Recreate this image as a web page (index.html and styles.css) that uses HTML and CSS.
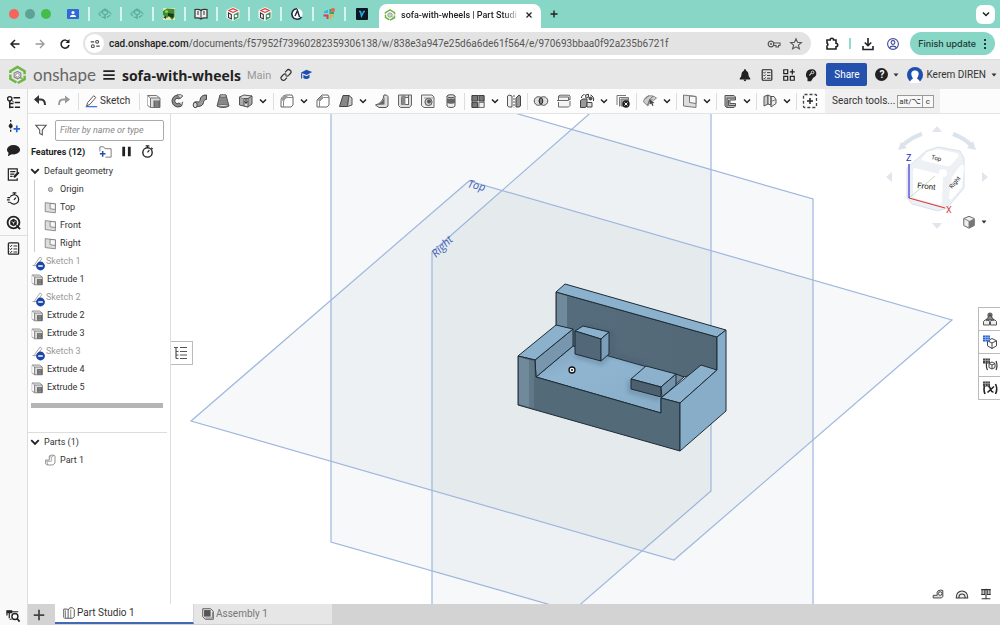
FILE: index.html
```html
<!DOCTYPE html>
<html lang="en">
<head>
<meta charset="utf-8">
<title>sofa-with-wheels | Part Studio 1</title>
<link rel="stylesheet" href="styles.css">
</head>
<body>
<svg class="defs" aria-hidden="true">
  <symbol id="caret" viewBox="0 0 8 8"><path d="M1 2.500 4 5.500 7 2.500" fill="none" stroke="#222" stroke-width="1.500"/></symbol>
  <symbol id="tri" viewBox="0 0 8 8"><path d="M1.500 2.500h5L4 5.500z" fill="#333"/></symbol>
  <symbol id="logo" viewBox="0 0 20 20"><path d="M10 1.500 17.500 6v8.500L10 18.500 2.500 14V6z" fill="none" stroke="#6cb744" stroke-width="2.600" stroke-dasharray="12 1.500"/><path d="M10 6.200 13.500 8v4.200L10 14l-3.500-1.800V8z" fill="#ddd" stroke="#888" stroke-width="1.200"/><circle cx="10" cy="10.200" r="1.900" fill="#fff" stroke="#999"/><path d="M13 12.500 16 15" stroke="#6cb744" stroke-width="1.500"/></symbol>
  <symbol id="eye" viewBox="0 0 14 14"><path d="M1 7q2.500-3.500 6-3.500T13 7q-2.500 3.500-6 3.500T1 7z" fill="none" stroke="#58ad9d" stroke-width="1.200" stroke-dasharray="4 1.200"/><path d="m7 2 2.500 1.500v3L7 8 4.500 6.500v-3z" fill="none" stroke="#58ad9d" stroke-width="1.200"/><path d="M7 8v4" stroke="#58ad9d" stroke-width="1.300"/></symbol>
  <symbol id="cubefav" viewBox="0 0 14 14"><path d="M7 0l6.500 3v8L7 14l-6.500-3V3z" fill="#f4f4f4"/><path d="M7 1l5.500 2.500L7 6 1.500 3.500z" fill="#d6423e"/><path d="M4 3.500 7 2.400l3 1.100-3 1.300z" fill="#fff"/><path d="M1.500 5 6.300 7v6l-4.800-2.600z" fill="#fff"/><path d="M2.500 6v4.500l2.800 1.400V7.500z" fill="none" stroke="#333" stroke-width="1.100"/><path d="M7.800 7.500 12.500 5v5.500l-4.700 2.700z" fill="#3d8a57"/><circle cx="10" cy="9" r="1.300" fill="#fff"/></symbol>
  <symbol id="extrude" viewBox="0 0 16 16"><path d="M1.500 12.500v-10h9l3 2.200" fill="#eee" stroke="#777"/><path d="M1.500 12.500 4.500 14.500V5L1.500 2.500" fill="#fff" stroke="#777"/><path d="M4.500 5h9.500v9.500H4.500z" fill="#ddd" stroke="#777"/><path d="M7.500 7.500H14v7H7.500z" fill="#666"/><path d="M9 9h3.500M9 11h3.500M9 13h3.500" stroke="#999"/></symbol>
  <symbol id="revolve" viewBox="0 0 16 16"><path d="M13 3.500A6 6 0 1 0 13 12.500L10 10A2.600 2.600 0 1 1 10 6z" fill="#8a8a8a" stroke="#444"/><path d="M8 2l3 3.500 3-2.500-2.500-1.500zM10 10l3 2.500.8-3.800" fill="#ccc" stroke="#555" stroke-width=".8"/></symbol>
  <symbol id="sweep" viewBox="0 0 16 16"><path d="M2 9.500c3-2 5.500 1 6-2C8.500 3.500 10.500 2 14.500 2v4.500c-2.500 0-2.500 1-3 3C10.500 14.500 6 12.500 3.500 14.500z" fill="#999" stroke="#444"/><ellipse cx="3.200" cy="12" rx="2" ry="2.600" fill="#ddd" stroke="#444"/></symbol>
  <symbol id="loft" viewBox="0 0 16 16"><path d="M5 2h6l3 11c-3 2-9 2-12 0z" fill="#888" stroke="#555"/><path d="M5 2h6v2H5zM2 13c3-2 9-2 12 0" fill="#ddd" stroke="#555" stroke-width=".8"/></symbol>
  <symbol id="thicken" viewBox="0 0 16 16"><path d="M1.500 4 6 5.500 14 3v8l-4 3-8.500-2z" fill="#aaa" stroke="#555"/><path d="M1.500 4 6 2l8 1-4 2.500v8.500L6 13V5.500M10 5.500H6" fill="#ddd" stroke="#555"/><path d="M8 6v4M6.500 8.500 8 10.500l1.500-2" fill="none" stroke="#222"/></symbol>
  <symbol id="fillet" viewBox="0 0 16 16"><path d="M2 14V7.500C2 4 5 2 8 2h5l1 2v8l-2 2z" fill="#fff" stroke="#666"/><path d="M4.500 14V9C4.500 6 7 4.500 9 4.500h5" fill="none" stroke="#888"/><path d="M2.500 7C3 4 5 2.500 8 2.500L9 4.500c-2.500 0-4 2-4.500 4z" fill="#999"/></symbol>
  <symbol id="chamfer" viewBox="0 0 16 16"><path d="M2 14V7l5-5h6l1 2v8l-2 2z" fill="#fff" stroke="#666"/><path d="M4.500 14V8.500l4-4H14" fill="none" stroke="#888"/><path d="m2.500 7 4.500-4.500 1.500 2-4 4z" fill="#999"/></symbol>
  <symbol id="draft" viewBox="0 0 16 16"><path d="M5 2.500h6L9.500 13.500h-8z" fill="#888" stroke="#444"/><path d="M11 2.500 14 5v7l-4.500 1.500z" fill="#ccc" stroke="#555"/></symbol>
  <symbol id="rib" viewBox="0 0 16 16"><path d="M10 2h2.500l1.500 1.500V13L12 14.500H5L1.500 12Q9 10 10 2z" fill="#ddd" stroke="#555"/><path d="M10.500 4v7.500l-8 .5Q8.500 10 10.500 4z" fill="#666"/></symbol>
  <symbol id="shell" viewBox="0 0 16 16"><path d="M1.500 2h13v10l-2 2.500h-9l-2-2z" fill="#ddd" stroke="#666"/><path d="M4.500 4.500h7v7h-7z" fill="#fff" stroke="#666"/><path d="M4.500 2v10h4V2z" fill="#888"/><path d="M11.500 2v10" stroke="#666"/></symbol>
  <symbol id="hole" viewBox="0 0 16 16"><path d="M1.500 2H12l2 2v10.500H4l-2.500-2z" fill="#eee" stroke="#666"/><path d="M4 5h10" stroke="#999"/><circle cx="8.500" cy="9" r="3.600" fill="#ccc" stroke="#555"/><circle cx="9" cy="8.500" r="2" fill="#555"/></symbol>
  <symbol id="thread" viewBox="0 0 16 16"><path d="M4 3v10c1 2 7 2 8 0V3z" fill="#eee" stroke="#555"/><path d="M4 5.500h8V10c-2 1-6 1-8 0z" fill="#666"/><ellipse cx="8" cy="3.200" rx="4" ry="1.500" fill="#ddd" stroke="#555"/></symbol>
  <symbol id="pattern" viewBox="0 0 16 16"><path d="M2 2.500h12v12H2z" fill="#ccc" stroke="#666"/><path d="M2 2.500h5.500v5.500H2zM9 2.500h5V8H9zM2 9.500h5.500v5H2z" fill="#777" stroke="#333" stroke-width=".8"/><path d="M9 9.500h5v5H9z" fill="#eee" stroke="#666" stroke-width=".8"/></symbol>
  <symbol id="mirror" viewBox="0 0 16 16"><path d="M1.500 3 3 2l3 1v11H3l-1.500-1z" fill="#eee" stroke="#555"/><path d="M14.500 3 13 2l-3 3v9h3l1.500-1z" fill="#999" stroke="#444"/><path d="M8 2v12.500" stroke="#555" stroke-dasharray="2 1"/></symbol>
  <symbol id="boolean" viewBox="0 0 16 16"><circle cx="5.500" cy="8" r="4.300" fill="#ddd" stroke="#555"/><circle cx="10.500" cy="8" r="4.300" fill="#ddd" stroke="#555"/><path d="M8 4.500a4.300 4.300 0 0 1 0 7 4.300 4.300 0 0 1 0-7z" fill="#888" stroke="#222"/></symbol>
  <symbol id="split" viewBox="0 0 16 16"><path d="M2.500 7V3l1.500-.8h9l1 .8v3.500M2.500 9v5h10l1.500-1.500V8" fill="#f3f3f3" stroke="#666"/><path d="M1 7.500h11l2.500-1.500M2.500 4h10v3" fill="none" stroke="#666"/></symbol>
  <symbol id="transform" viewBox="0 0 16 16"><path d="M1.500 7.500 4 6h4v7l-2 1.500H1.500z" fill="#999" stroke="#444"/><path d="M8 9.500h5V14H8zM6.500 2l3-.8v3L7 5.200z" fill="#ddd" stroke="#444"/><circle cx="11.500" cy="5.500" r="2" fill="#555"/><path d="M2.500 5c0-2 1-3 3-3.500M14.500 8c.5-3-.5-5-3-6" fill="none" stroke="#333"/></symbol>
  <symbol id="delete" viewBox="0 0 16 16"><path d="M2 12V2.500h9M4.500 13.500V4.500h9V8" fill="none" stroke="#777"/><path d="M6 6h7v7H6z" fill="#aaa" stroke="#777"/><circle cx="11" cy="11" r="3.700" fill="#222"/><path d="m9.500 9.500 3 3m0-3-3 3" stroke="#fff"/></symbol>
  <symbol id="modify" viewBox="0 0 16 16"><path d="M1.500 9C2 4 8 0 14.500 5l-3 2.500C9 6 7 7 6 13z" fill="#ccc" stroke="#888"/><path d="m3 6 4-3.500M5.500 12l2-5L11 3" fill="none" stroke="#777"/><path d="m7.500 6 5 4-2 .2 1 2.300-1.200.5-1-2.500-1.800 1z" fill="#444"/></symbol>
  <symbol id="plane" viewBox="0 0 16 16"><path d="M1.500 2 14 3.500v11L1.500 13z" fill="#ddd" stroke="#777"/><path d="M7.500 3v6.500l6.500 1V3.500z" fill="#f7f7f7" stroke="#777"/></symbol>
  <symbol id="frame" viewBox="0 0 16 16"><path d="M3 2.500h9l1.500 1.500v3H8v3.500h5.500V13L12 14.500H5L3 13z" fill="#bbb" stroke="#555"/><path d="M5 5h8.500M5 5v9.500M6.500 7v5.500H13" fill="none" stroke="#555"/></symbol>
  <symbol id="sheet" viewBox="0 0 16 16"><path d="M2 3.500 6 2v9l-4 2z" fill="#ccc" stroke="#555"/><path d="m6 2 3 1.500V12l-3-1zM9 3.500h3l2 3v4L9 14z" fill="#eee" stroke="#555"/><path d="M9 8.500 14 6.500" stroke="#777"/></symbol>
  <symbol id="add" viewBox="0 0 16 16"><rect x="1.500" y="1.500" width="13" height="13" rx="1" fill="none" stroke="#444" stroke-width="1.300" stroke-dasharray="3 2"/><path d="M8 5v6M5 8h6" stroke="#222" stroke-width="1.500"/></symbol>
  <symbol id="sketchoff" viewBox="0 0 16 16"><path d="M1.500 10.500h12M4 9l5-7 2 1.500-5 6.500-2.500 1z" fill="none" stroke="#aaa"/><circle cx="9.500" cy="11" r="4.400" fill="#1c46a8"/><path d="M7.200 11h4.600" stroke="#fff" stroke-width="1.500"/></symbol>
  <symbol id="list" viewBox="0 0 16 16"><rect x="2.500" y="2" width="11" height="12" rx="1" fill="none" stroke="#222" stroke-width="1.300"/><path d="m4 5 1 1 1.500-1.800M4 8.200l1 1L6.500 7.400M4 11.400l1 1 1.500-1.800M8 5.300h4M8 8.500h4M8 11.700h4" fill="none" stroke="#222"/></symbol>
  <symbol id="watch" viewBox="0 0 16 16"><circle cx="8" cy="9" r="5" fill="none" stroke="#222" stroke-width="1.500"/><path d="M8 9l2-2.500M6 2h4M8 2v2M12 4l1.500 1.500" stroke="#222" stroke-width="1.300"/></symbol>
</svg>

<header class="tabs">
  <div class="lights"><i class="red"></i><i class="dim"></i><i class="green"></i></div>
  <div class="pinned">
    <svg viewBox="0 0 14 14"><rect x="1" y="2" width="12" height="10" rx="1" fill="#3167d8"/><circle cx="7" cy="5.500" r="1.600" fill="#fff"/><path d="M4 10c0-3 6-3 6 0z" fill="#fff"/></svg>
    <svg><use href="#eye"/></svg>
    <svg><use href="#eye"/></svg>
    <svg viewBox="0 0 14 14"><path d="M1 1h12v12H1z" fill="#e7e5b5"/><path d="M1 4 5 1.500 12.500 2v8L10 13 7 9 5 11 1 8z" fill="#3d8b35"/><path d="m6 6 6 1-1 4-5-2zM1 10l3-1v3z" fill="#173a1b"/><circle cx="4.500" cy="4.500" r="1.500" fill="#9ad04f"/></svg>
    <svg viewBox="0 0 14 14"><path d="M1 2.500C4 2 6 2.500 7 3.500c1-1 3-1.500 6-1v8.500C10 10.500 8 11 7 12c-1-1-3-1.500-6-1z" fill="#eee" stroke="#333" stroke-width="1.200"/><path d="M7 3.500V12M3 5h2M3 7h2M9 5h2M9 7h2" stroke="#333"/></svg>
    <svg><use href="#cubefav"/></svg>
    <svg><use href="#cubefav"/></svg>
    <svg viewBox="0 0 14 14"><circle cx="7" cy="7" r="5.600" fill="#fff"/><path d="M7 1.700A5.300 5.300 0 1 0 11.500 10" fill="none" stroke="#1c2740" stroke-width="1.600"/><path d="m5 9 2.500-5.500L9.500 10" fill="none" stroke="#1c2740" stroke-width="1.400"/></svg>
    <svg viewBox="0 0 14 14"><path d="M5 3v3M2 5h3" stroke="#43b3e4" stroke-width="2"/><path d="M8.500 2v4h3.500" fill="none" stroke="#3a9e78" stroke-width="2"/><path d="M1.500 8.500h4V12" fill="none" stroke="#d83d5d" stroke-width="2"/><path d="M8.500 12V8.500h3.500" fill="none" stroke="#e2b03f" stroke-width="2"/><circle cx="11" cy="3" r="2" fill="#e96155"/></svg>
    <svg viewBox="0 0 14 14"><rect x="1" y="1" width="12" height="12" rx="1" fill="#0c1722"/><path d="M4 4.500h1.500L6.500 9l2.300-4.500H10" fill="none" stroke="#27a8e0" stroke-width="1.600"/></svg>
  </div>
  <div class="tab"><svg><use href="#logo"/></svg><span>sofa-with-wheels | Part Studi</span><button aria-label="Close tab"><svg viewBox="0 0 8 8"><path d="m1.500 1.500 5 5m0-5-5 5" stroke="#222" stroke-width="1.200"/></svg></button></div>
  <button class="newtab" aria-label="New tab"><svg viewBox="0 0 10 10"><path d="M5 1.500v7M1.500 5h7" stroke="#222" stroke-width="1.400"/></svg></button>
  <button class="tabmenu" aria-label="Search tabs"><svg><use href="#caret"/></svg></button>
</header>

<nav class="browser">
  <button aria-label="Back"><svg viewBox="0 0 16 16"><path d="M12.500 8H4m4-4L4 8l4 4" fill="none" stroke="#222" stroke-width="1.500"/></svg></button>
  <button aria-label="Forward"><svg viewBox="0 0 16 16"><path d="M3.500 8H12M8 4l4 4-4 4" fill="none" stroke="#999" stroke-width="1.300"/></svg></button>
  <button aria-label="Reload"><svg viewBox="0 0 16 16"><path d="M11.500 6A4 4 0 1 0 12 9" fill="none" stroke="#222" stroke-width="1.500"/><path d="M12.500 3v4h-4z" fill="#222"/></svg></button>
  <div class="address">
    <span class="site"><svg viewBox="0 0 14 14"><path d="M2 4.500h4M8.500 9.500h4" stroke="#444" stroke-width="1.300"/><circle cx="9.500" cy="4.500" r="1.700" fill="none" stroke="#444" stroke-width="1.200"/><circle cx="4.500" cy="9.500" r="1.700" fill="none" stroke="#444" stroke-width="1.200"/></svg></span>
    <a href="#"><b>cad.onshape.com</b>/documents/f57952f73960282359306138/w/838e3a947e25d6a6de61f564/e/970693bbaa0f92a235b6721f</a>
    <svg viewBox="0 0 14 14"><circle cx="4" cy="7" r="2.800" fill="none" stroke="#555" stroke-width="1.200"/><circle cx="4" cy="7" r="1" fill="#555"/><path d="M7 6h6v2.500h-1.500V10H9V8.500H7" fill="none" stroke="#555" stroke-width="1.100"/></svg>
    <svg viewBox="0 0 14 14"><path d="m7 1.800 1.500 3.500 3.900.3-3 2.500 1 3.800L7 9.800l-3.400 2.100 1-3.800-3-2.500 3.900-.3z" fill="none" stroke="#555" stroke-width="1.100"/></svg>
  </div>
  <button aria-label="Extensions"><svg viewBox="0 0 16 16"><path d="M3 4h3.200a1.700 1.700 0 0 1 3.400 0H12v3.300a1.700 1.700 0 0 1 0 3.400V13H3v-3a1.700 1.700 0 0 0 0-3z" fill="none" stroke="#222" stroke-width="1.600"/></svg></button>
  <i class="mint"></i>
  <button aria-label="Downloads"><svg viewBox="0 0 16 16"><path d="M8 2v7M4.800 6.500 8 9.700l3.200-3.200M3 10v3.500h10V10" fill="none" stroke="#222" stroke-width="1.600"/></svg></button>
  <button aria-label="Profile"><svg viewBox="0 0 16 16"><circle cx="8" cy="8" r="5.400" fill="none" stroke="#414c9a" stroke-width="1.100"/><circle cx="8" cy="6.500" r="1.900" fill="none" stroke="#414c9a" stroke-width="1.100"/><path d="M4.500 12c1-2.500 6-2.500 7 0" fill="none" stroke="#414c9a" stroke-width="1.100"/></svg></button>
  <button class="update">Finish update<svg viewBox="0 0 4 12"><path d="M1 1h2v2H1zM1 5h2v2H1zM1 9h2v2H1z" fill="#223c37"/></svg></button>
</nav>

<header class="doc">
  <svg class="mark"><use href="#logo"/></svg>
  <span class="brand">onshape</span>
  <button aria-label="Menu"><svg viewBox="0 0 16 16"><path d="M1.500 3.500h13M1.500 8h13M1.500 12.500h13" stroke="#222" stroke-width="2"/></svg></button>
  <h1>sofa-with-wheels</h1>
  <span class="branch">Main</span>
  <button aria-label="Copy link"><svg viewBox="0 0 16 16"><path d="m7 5 2-2.200a2.600 2.600 0 0 1 4 3.500L11 8.500a2.500 2.500 0 0 1-3.500 0M9 11l-2 2.200a2.600 2.600 0 0 1-4-3.500L5 7.500a2.500 2.500 0 0 1 3.500 0" fill="none" stroke="#333" stroke-width="1.400"/></svg></button>
  <button aria-label="Learning"><svg viewBox="0 0 16 16"><path d="M2 5.500 8.500 2 15 4.500 9 8z" fill="#1e4fae"/><path d="M5 8v3.500c2 1.500 5 1.200 7-.5V7.500L9 9.500z" fill="#1e4fae"/><path d="M3 6v6" stroke="#1e4fae" stroke-width="1.300"/></svg></button>
  <div class="account">
    <button aria-label="Notifications"><svg viewBox="0 0 16 16"><path d="M8 1.500c1 0 1.300.7 1.300 1.500C12 4 12 7 12.300 9.500L14 12v1H2v-1l1.700-2.500C4 7 4 4 6.700 3c0-.8.3-1.500 1.300-1.500zM6.500 13.500h3C9.500 15.500 6.500 15.500 6.500 13.500z" fill="#222"/></svg></button>
    <button aria-label="Tasks"><svg><use href="#list"/></svg></button>
    <button aria-label="Apps"><svg viewBox="0 0 16 16"><path d="M2 2h4.500v4.500H2zM2 9.500h4.500V14H2zM9.500 9.500H14V14H9.500zM11.800 1.500v6M9 4.500h5.500" fill="none" stroke="#222" stroke-width="1.400"/></svg></button>
    <button aria-label="Advisor"><svg viewBox="0 0 16 16"><path d="M9 1.500c4 0 5.500 3 5 6-.5 2-2 3-3.500 3.500L8 15H4v-3.500C2 10.500 2 8 2.500 6 3.200 3 5.500 1.500 9 1.500z" fill="#222"/><path d="m6 8.500 2.500-2.500" stroke="#eee" stroke-width="1.200"/><circle cx="9.800" cy="5" r="1.500" fill="none" stroke="#eee"/></svg></button>
    <button class="share">Share</button>
    <button class="help" aria-label="Help"><span>?</span><svg class="small"><use href="#tri"/></svg></button>
    <button class="user"><svg viewBox="0 0 16 16"><circle cx="8" cy="8" r="8" fill="#1e4fae"/><path d="M3 16c0-3 2-3.500 3-4.500C2.500 6 5 3.500 8 3.500s5.500 2.500 2 8c1 1 3 1.500 3 4.500z" fill="#fff"/></svg>Kerem DIREN<svg class="small"><use href="#tri"/></svg></button>
  </div>
</header>

<div class="work">
  <aside class="rail">
    <button aria-label="Feature tree"><svg viewBox="0 0 16 16"><circle cx="4" cy="4" r="2.300" fill="none" stroke="#222" stroke-width="1.400"/><path d="M4 6v8M4 9h4M4 13h4M8 3h7M9.500 8H15M9.500 13H15" stroke="#222" stroke-width="1.600"/><path d="m5.500 5 3 3" stroke="#222"/></svg></button>
    <button aria-label="Add"><svg viewBox="0 0 16 16"><path d="M5 1v13" stroke="#222" stroke-width="1.400" stroke-dasharray="2 1.500"/><circle cx="5" cy="7.500" r="2.200" fill="#222"/><path d="M11.500 7v7M8 10.500h7" stroke="#2a62d4" stroke-width="1.800"/></svg></button>
    <button aria-label="Comments"><svg viewBox="0 0 16 16"><ellipse cx="8" cy="7.200" rx="7" ry="5" fill="#222"/><path d="M3 9.500 2 14l5-2.500z" fill="#222"/></svg></button>
    <button aria-label="Notes"><svg viewBox="0 0 16 16"><path d="M12 6V2H2.500v12H12v-2M4.500 5H10M4.500 7.500H9M4.500 10H7" fill="none" stroke="#222" stroke-width="1.300"/><path d="m8.500 11 5-5.500" stroke="#222" stroke-width="2.400"/></svg></button>
    <button aria-label="History"><svg viewBox="0 0 16 16"><path d="M4.500 6a5 5 0 1 1 0 6M1.500 7h3M1 9.500h3M2 12h2.500M7 2h4M9 2v2" fill="none" stroke="#222" stroke-width="1.300"/><path d="m8.500 9.500 2-2.500" stroke="#222" stroke-width="1.300"/></svg></button>
    <button aria-label="Render"><svg viewBox="0 0 16 16"><circle cx="8" cy="8" r="6.300" fill="none" stroke="#222" stroke-width="2"/><path d="m8 4 3.500 2v4L8 12l-3.500-2V6z" fill="#222"/><path d="m6 7 2 1 2-1M8 8v2" fill="none" stroke="#fff" stroke-width=".8"/><path d="m11 11 4 4" stroke="#222" stroke-width="2"/></svg></button>
    <hr>
    <button aria-label="Checklist"><svg><use href="#list"/></svg></button>
    <button class="last" aria-label="Search model"><svg viewBox="0 0 16 16"><path d="M1 3h5v2H1zM3.500 4v7M1 4v4" fill="#222" stroke="#222" stroke-width="1.300"/><path d="M6 4h7M6 12H4" stroke="#222" stroke-width="1.300"/><circle cx="9.500" cy="9" r="3.200" fill="#fff" stroke="#222" stroke-width="1.500"/><path d="m12 11.500 2.500 3" stroke="#222" stroke-width="1.800"/></svg></button>
  </aside>

  <div class="body">
    <div class="toolbar">
      <div class="group"><button aria-label="Undo"><svg viewBox="0 0 16 16"><path d="M3 6.500h6c2.500 0 4 2 4 5.500" fill="none" stroke="#333" stroke-width="2"/><path d="M7 2v9L2 6.500z" fill="#333"/></svg></button><button aria-label="Redo"><svg viewBox="0 0 16 16"><path d="M13 6.500H7c-2.500 0-4 2-4 5.500" fill="none" stroke="#999" stroke-width="1.800"/><path d="M9 2.500v8l5-4z" fill="#999"/></svg></button></div>
      <div class="group sketch"><button><svg viewBox="0 0 16 16"><path d="m4 10 7-8 2.500 2-7 8L3 13.500z" fill="#fff" stroke="#444"/><path d="M2 14.500h13" stroke="#2a62d4" stroke-width="1.300"/></svg>Sketch</button></div>
      <div class="group wide"><button aria-label="Extrude"><svg><use href="#extrude"/></svg></button><button aria-label="Revolve"><svg><use href="#revolve"/></svg></button><button aria-label="Sweep"><svg><use href="#sweep"/></svg></button><button aria-label="Loft"><svg><use href="#loft"/></svg></button><button aria-label="Thicken"><svg><use href="#thicken"/></svg></button><button class="drop" aria-label="More solids"><svg><use href="#caret"/></svg></button></div>
      <div class="group"><button aria-label="Fillet"><svg><use href="#fillet"/></svg></button><button class="drop" aria-label="More fillets"><svg><use href="#caret"/></svg></button><button aria-label="Chamfer"><svg><use href="#chamfer"/></svg></button><button aria-label="Draft"><svg><use href="#draft"/></svg></button><button class="drop" aria-label="More drafts"><svg><use href="#caret"/></svg></button><button aria-label="Rib"><svg><use href="#rib"/></svg></button><button aria-label="Shell"><svg><use href="#shell"/></svg></button><button aria-label="Hole"><svg><use href="#hole"/></svg></button><button aria-label="Thread"><svg><use href="#thread"/></svg></button></div>
      <div class="group"><button aria-label="Pattern"><svg><use href="#pattern"/></svg></button><button class="drop" aria-label="More patterns"><svg><use href="#caret"/></svg></button><button aria-label="Mirror"><svg><use href="#mirror"/></svg></button></div>
      <div class="group"><button aria-label="Boolean"><svg><use href="#boolean"/></svg></button><button aria-label="Split"><svg><use href="#split"/></svg></button><button aria-label="Transform"><svg><use href="#transform"/></svg></button><button class="drop" aria-label="More transforms"><svg><use href="#caret"/></svg></button><button aria-label="Delete part"><svg><use href="#delete"/></svg></button></div>
      <div class="group"><button aria-label="Modify"><svg><use href="#modify"/></svg></button><button class="drop" aria-label="More modify tools"><svg><use href="#caret"/></svg></button></div>
      <div class="group"><button aria-label="Plane"><svg><use href="#plane"/></svg></button><button class="drop" aria-label="More planes"><svg><use href="#caret"/></svg></button></div>
      <div class="group"><button aria-label="Frame"><svg><use href="#frame"/></svg></button><button class="drop" aria-label="More frames"><svg><use href="#caret"/></svg></button></div>
      <div class="group"><button aria-label="Sheet metal"><svg><use href="#sheet"/></svg></button><button class="drop" aria-label="More sheet metal"><svg><use href="#caret"/></svg></button></div>
      <div class="group"><button aria-label="Add custom feature"><svg><use href="#add"/></svg></button></div>
      <button class="search">Search tools...<kbd>alt/⌥</kbd><kbd>c</kbd></button>
    </div>

    <div class="split">
      <section class="panel">
        <div class="filter"><svg viewBox="0 0 16 16"><path d="M2 2.500h12L9.500 8v5.500l-3-1.500V8z" fill="none" stroke="#555" stroke-width="1.200"/></svg><input type="text" aria-label="Filter features" placeholder="Filter by name or type"></div>
        <div class="features"><h2>Features (12)</h2>
          <button aria-label="New folder"><svg viewBox="0 0 16 16"><path d="M2 8V3h4l1.500 2H14v9H8" fill="none" stroke="#777"/><path d="M5 7.500v6M2 10.500h6" stroke="#1e4fae" stroke-width="1.600"/></svg></button>
          <button aria-label="Pause"><svg viewBox="0 0 16 16"><path d="M5 3v10M11 3v10" stroke="#222" stroke-width="3"/></svg></button>
          <button aria-label="Regeneration times"><svg><use href="#watch"/></svg></button></div>
        <button class="row head"><svg class="chev"><use href="#caret"/></svg>Default geometry</button>
        <ul class="nested">
          <li><svg viewBox="0 0 16 16"><circle cx="8" cy="8" r="2.600" fill="#ccc" stroke="#777"/></svg>Origin</li>
          <li><svg><use href="#plane"/></svg>Top</li>
          <li><svg><use href="#plane"/></svg>Front</li>
          <li><svg><use href="#plane"/></svg>Right</li>
        </ul>
        <ul class="flat">
          <li class="off"><svg><use href="#sketchoff"/></svg>Sketch 1</li>
          <li><svg><use href="#extrude"/></svg>Extrude 1</li>
          <li class="off"><svg><use href="#sketchoff"/></svg>Sketch 2</li>
          <li><svg><use href="#extrude"/></svg>Extrude 2</li>
          <li><svg><use href="#extrude"/></svg>Extrude 3</li>
          <li class="off"><svg><use href="#sketchoff"/></svg>Sketch 3</li>
          <li><svg><use href="#extrude"/></svg>Extrude 4</li>
          <li><svg><use href="#extrude"/></svg>Extrude 5</li>
        </ul>
        <div class="rollback"></div>
        <div class="parts">
          <button class="row head"><svg class="chev"><use href="#caret"/></svg>Parts (1)</button>
          <ul class="nested plain"><li><svg viewBox="0 0 16 16"><path d="M2 7.500h4.500v-5L9 1.500h3.500l1 1V11L11 13.500H4L2 12z" fill="#fff" stroke="#777"/><path d="M2 7.500 4 9h5V4l3.500-2.500M9 4 6.500 2.500M4 9v4.500" fill="none" stroke="#999"/></svg>Part 1</li></ul>
        </div>
      </section>

      <main class="canvas">
        <svg class="scene" viewBox="171 114 829 490" preserveAspectRatio="xMinYMin slice" role="img" aria-label="Sofa model with default planes">
          <defs>
            <linearGradient id="dark" x1="0" y1="0" x2="1" y2="0"><stop offset="0" stop-color="#566d7d"/><stop offset="1" stop-color="#536877"/></linearGradient>
            <linearGradient id="light" x1="0" y1="0" x2="1" y2="1"><stop offset="0" stop-color="#7f9fb8"/><stop offset=".3" stop-color="#8fb5d1"/><stop offset="1" stop-color="#88adc9"/></linearGradient>
            <filter id="soft" x="-30%" y="-30%" width="160%" height="160%"><feGaussianBlur stdDeviation="2"/></filter>
          </defs>
          <g fill="#7d95a8" fill-opacity=".065" stroke="#9fb7df" stroke-width="1.200">
            <path d="M331 60V542L813 680V199z"/>
            <path d="M432 252 711 7V491L432 733z"/>
            <path d="M191 421 469 181 952 320 674 560z"/>
          </g>
          <g class="planelabel"><text x="467" y="187" transform="rotate(14 467 187)">Top</text><text x="436" y="258" transform="rotate(-45 436 258)">Right</text></g>
          <g stroke="#1d2b36" stroke-width="1" stroke-linejoin="round">
            <path d="M556 292 717 337V370L683 377 573 348 556 325z" fill="url(#dark)"/>
            <path d="M557 293 567 296V328L557 325z" fill="#718a9b" stroke="none"/>
            <path d="M556 292 565 284 726 330 717 337z" fill="#8bb1cd"/>
            <path d="M536 377 573 346 683 377 661 398V413z" fill="url(#light)"/>
          </g>
          <g fill="none" stroke="#42586a" stroke-width="4" opacity=".35" filter="url(#soft)"><path d="M575 355 601 363 612 353V334L583 325M630 380V391L660 399M612 354 645 364"/></g>
          <g stroke="#1d2b36" stroke-width="1" stroke-linejoin="round">
            <path d="M535 360 573 329V346L536 377z" fill="#7897ae"/>
            <path d="M518 356 556 325 573 329 535 360z" fill="#8bb1cd"/>
            <path d="M575 331 583 326 609 332 601 339z" fill="#8bb1cd"/>
            <path d="M575 331 601 339V361L575 354z" fill="#526878"/>
            <path d="M601 339 609 332V354L601 361z" fill="#7c9fb9"/>
            <path d="M676 374 684 377 662 397z" fill="#6f8da2"/>
            <path d="M631 379 646 366 676 374 661 387z" fill="#8bb1cd"/>
            <path d="M631 379 661 387V397L631 389z" fill="#4c606f"/>
            <path d="M661 387 676 374V385L662 397z" fill="#7393aa"/>
            <path d="M661 398 701 365 717 370 680 403z" fill="#8bb1cd"/>
            <path d="M518 356 535 360 536 377 661 413V398L680 403V451L518 405z" fill="#536a79"/>
            <path d="M519 357 529 360V407L519 404z" fill="#718a9b" stroke="none"/>
            <path d="M529 360 534 361V408L529 407z" fill="#607887" stroke="none"/>
            <path d="M680 403 717 370V337L726 330V411L680 451z" fill="#88adc9"/>
          </g>
          <circle cx="572" cy="370" r="3" fill="#fff" stroke="#111" stroke-width="1.300"/><circle cx="572" cy="370" r="1" fill="#111"/>
        </svg>

        <button class="toggle" aria-label="Show feature list"><svg viewBox="0 0 16 16"><path d="M1 2.500h4M3 2.500v11M3 6.500h2.500M3 10h2.500M3 13.500h2.500M7 2.500h7M7 6.500h7M7 10h7M7 13.500h7" fill="none" stroke="#555" stroke-width="1.200"/></svg></button>

        <svg class="viewcube" viewBox="0 0 110 112" role="img" aria-label="View orientation">
          <g fill="#e2e6ec"><path d="m55 3 5 6H50zM55 106l-5-6h10zM4 54l6-5v10zM106 54l-6-5v10z"/></g>
          <g fill="none" stroke="#dbe3ed" stroke-width="4"><path d="M21 22Q30 14 40 11M71 11Q82 15 89 22"/></g>
          <path d="m16 27 3-8 6 6zM94 27l-9-2 6-7z" fill="#dbe3ed"/>
          <path d="m44 28 12-4 22 4 4 7v30L65 85l-9 3-26-7-5-6V45z" fill="#edf1f6" stroke="#d9e1ec"/>
          <path d="m45 29 11-3 18 4q4 1 2 4l-7 8q-2 2-5 1l-22-5q-4-1-1-4zM33 45l24 6q4 1 4 5l-1 22q0 4-5 3l-20-5q-4-1-4-5V49q0-4 2-4zM70 54l8-11q4-4 4 2l-2 19-9 11q-4 4-4-2z" fill="#fff"/>
          <circle cx="61" cy="50" r="4" fill="#fff"/>
          <path d="M27 75 53 53" stroke="#bfe2b8"/><path d="M27 75V41" stroke="#3531db" stroke-width="1.200"/><path d="m27 75 36 10" stroke="#dc3a36" stroke-width="1.200"/>
          <g class="cubelabel"><text x="35" y="65" transform="rotate(6 35 65)">Front</text><text class="tiny" x="49" y="36" transform="rotate(12 49 36)">Top</text><text class="tiny" x="70" y="66" transform="rotate(-50 70 66)">Right</text></g>
          <text class="axis z" x="24" y="38">Z</text><text class="axis x" x="64" y="90">X</text>
        </svg>
        <button class="render" aria-label="View options"><svg viewBox="0 0 16 16"><path d="m2 4 6-2.500L14 4v8l-6 3-6-3z" fill="#eee" stroke="#555"/><path d="m8 7 6-3v8l-6 3z" fill="#777"/><path d="m2 4 6 3v8" fill="none" stroke="#777"/></svg><svg class="small"><use href="#tri"/></svg></button>

        <div class="tables">
          <button aria-label="Appearances"><svg viewBox="0 0 16 16"><path d="M1.500 10.500 3 9h3l1.500 1.500V14h-6zM8.500 10.500 10 9h3l1.500 1.500V14h-6z" fill="#eee" stroke="#555"/><circle cx="8" cy="4" r="2.600" fill="#666"/><path d="m8 4 4 5H4z" fill="#888" stroke="#444"/></svg></button>
          <button aria-label="Configuration table"><svg viewBox="0 0 16 16"><path d="m10 4.500 4.500 2.300v5L10 14.500l-4.500-2.700v-5zM5.500 6.800 10 9l4.500-2.200M10 9v5.500" fill="#fff" stroke="#444"/><path d="M1 1.500h7v6H1z" fill="#2a62d4"/><path d="M1 3.500h7M3.500 1.500v6M6 1.500v6M1 5.500h7" stroke="#a9c4f5" stroke-width=".6"/></svg></button>
          <button aria-label="Properties table"><svg viewBox="0 0 16 16"><path d="m10 5 3 1.500v4L10 12l-3-1.500v-4zM7 6.500 10 8l3-1.500M10 8v4" fill="#fff" stroke="#444"/><path d="M5 5Q3.500 9 5.500 13M14 4q2 5 0 9" fill="none" stroke="#333" stroke-width="1.200"/><path d="M1 1.500h7v5H1z" fill="#444"/><path d="M1 3.500h7M3.500 1.500v5M6 1.500v5" stroke="#bbb" stroke-width=".6"/></svg></button>
          <button aria-label="Variable table"><svg viewBox="0 0 16 16"><path d="M3 5q-2 4 0 9M13.500 4q2.500 5 0 10M6 6.500c3-1 2 6 5.500 5.500M12 6.500 5.500 12.500" fill="none" stroke="#222" stroke-width="1.600"/><path d="M1 1.500h7v5H1z" fill="#444"/><path d="M1 3.500h7M3.500 1.500v5M6 1.500v5" stroke="#bbb" stroke-width=".6"/></svg></button>
        </div>

        <div class="measure">
          <button aria-label="Measure"><svg viewBox="0 0 16 16"><path d="M2.500 9.500H7V6q0-2 4-2.500l2.500.5v7L12 12.500H2.500z" fill="#ddd" stroke="#333"/><circle cx="10.500" cy="7.500" r="2" fill="#fff" stroke="#333"/></svg></button>
          <button aria-label="Protractor"><svg viewBox="0 0 16 16"><path d="M1.500 12.500v-1a6.500 7 0 0 1 13 0v1zM4.500 12a3.500 4 0 0 1 7 0" fill="#eee" stroke="#333" stroke-width="1.200"/></svg></button>
          <button aria-label="Mass properties"><svg viewBox="0 0 16 16"><path d="M8 2v11M2.500 3h11M3.500 3v5M6 3v5M10 3v5M12.500 3v5M2.500 8.500H7M9 8.500h4.500M3 13.500h10" fill="none" stroke="#333" stroke-width="1.200"/></svg></button>
        </div>
      </main>
    </div>

    <footer class="sheets">
      <button class="plus" aria-label="Add tab"><svg viewBox="0 0 16 16"><path d="M8 2v12M2 8h12" stroke="#444" stroke-width="2"/></svg></button>
      <button class="sheet active"><svg viewBox="0 0 16 16"><path d="M2 3.500h4l1 1V14H3l-1-1zM7 4.500 9 2h3l2 2v8l-2 2H7" fill="#fff" stroke="#444"/><path d="M10 4v10M4 5v9" stroke="#777"/></svg>Part Studio 1</button>
      <button class="sheet"><svg viewBox="0 0 16 16"><path d="M2 2h9l3 3v9H5l-3-3z" fill="#eee" stroke="#444"/><path d="M3.500 3.500h7.500v7.500H3.500z" fill="#555"/><path d="M5 12.500h8V6" fill="none" stroke="#777"/></svg>Assembly 1</button>
    </footer>
  </div>
</div>
</body>
</html>
```

FILE: styles.css
```css
* { box-sizing: border-box; }
body {
  margin: 0;
  min-height: 100vh;
  display: flex;
  flex-direction: column;
  background: #fff;
  color: #333;
  font: 10px/16px Roboto, sans-serif;
  overflow: hidden;
}
.defs { position: absolute; width: 0; height: 0; }
svg { width: 16px; height: 16px; flex: none; display: block; }
svg.small { width: 8px; height: 8px; }
button {
  border: 0;
  padding: 0;
  background: none;
  color: inherit;
  font: inherit;
  display: flex;
  align-items: center;
  justify-content: center;
  white-space: nowrap;
}
ul { list-style: none; margin: 0; padding: 0; }

.tabs { height: 28px; display: flex; align-items: center; background: #87d6c6; }
.lights { display: flex; gap: 6px; padding-left: 9px; width: 58px; }
.lights i { width: 10px; height: 10px; flex: none; border-radius: 50%; }
.red { background: #f6645c; }
.dim { background: #5ea296; }
.green { background: #43bd4c; }
.pinned { display: flex; }
.pinned svg { width: 32px; height: 14px; padding: 0 8px; border-right: 2px solid #d8f2ed; }
.pinned svg:last-child { border: 0; }
.tab {
  align-self: flex-end;
  width: 162px;
  height: 24px;
  margin-left: 1px;
  padding: 0 8px 2px 5px;
  display: flex;
  align-items: center;
  gap: 5px;
  background: #fff;
  border-radius: 8px 8px 0 0;
  font-size: 9px;
  font-weight: 500;
  color: #222;
}
.tab svg { width: 12px; height: 12px; }
.tab span { flex: 1; white-space: nowrap; mask-image: linear-gradient(90deg, #000 85%, transparent); }
.tab button svg { width: 8px; height: 8px; }
.newtab { margin-left: 8px; }
.newtab svg { width: 10px; height: 10px; }
.tabmenu { margin: 0 5px 0 auto; width: 19px; height: 19px; border-radius: 6px; background: #fff; }
.tabmenu svg { width: 8px; height: 8px; }

.browser { height: 32px; display: flex; align-items: center; padding: 0 5px 0 7px; gap: 9px; background: #fff; border-bottom: 1px solid #ddd; }
.address { flex: 1; min-width: 0; height: 23px; margin-left: 1px; padding: 0 8px 0 2px; display: flex; align-items: center; gap: 8px; border-radius: 12px; background: #e3e3e3; }
.site { width: 19px; height: 19px; border-radius: 50%; background: #fff; display: grid; place-items: center; flex: none; }
.address svg { width: 14px; height: 14px; }
.address .site svg { width: 12px; height: 12px; }
.address a { flex: 1; min-width: 0; overflow: hidden; white-space: nowrap; color: #555; text-decoration: none; margin-left: -3px; }
.address b { font-weight: 500; color: #222; }
.mint { width: 2px; height: 11px; background: #8fdccd; }
.browser .address + button { margin-left: 4px; }
.update { height: 23px; padding: 0 8px; gap: 7px; border-radius: 12px; background: #87d6c6; color: #1b3933; font-family: Inter, sans-serif; font-size: 9px; font-weight: 500; }
.update svg { width: 4px; height: 12px; }

.doc { height: 29px; padding: 0 4px 0 8px; display: flex; align-items: center; background: #e7e7e7; }
.doc .mark { width: 19px; height: 20px; }
.brand { margin: 0 6px; font: 17px/20px Lato, sans-serif; color: #666; }
.doc h1 { margin: 2px 6px 0; font: bold 14px/20px "Open Sans", sans-serif; color: #222; }
.branch { margin: 3px 8px 0 0; font-size: 11px; color: #999; }
.doc button + button { margin-left: 6px; }
.doc > button svg { width: 14px; height: 14px; }
.account { margin-left: auto; display: flex; align-items: center; }
.account svg { width: 14px; height: 14px; }
.doc .account button + button { margin-left: 8px; }
.doc .account .share { width: 41px; height: 23px; border-radius: 2px; background: #2450ae; color: #fff; }
.help { gap: 4px; }
.help span { width: 13px; height: 13px; border-radius: 50%; background: #222; color: #fff; font: bold 10px/13px Roboto, sans-serif; }
.doc .account .help + .user { margin-left: 7px; }
.user { gap: 3px; }
.user svg { width: 16px; height: 16px; }
.account .small { width: 8px; height: 8px; }
.doc .user .small { margin-left: 1px; margin-right: -2px; }

.work { flex: 1; display: flex; min-height: 0; }
.rail { width: 28px; display: flex; flex-direction: column; background: #f9f9f9; border-right: 1px solid #ddd; padding-top: 1px; }
.rail button { height: 24px; }
.rail svg { width: 15px; height: 15px; }
.rail hr { width: 100%; margin: 1px 0 0; border: 0; border-top: 1px solid #ddd; }
.rail .last { height: 20px; margin-top: auto; }
.body { flex: 1; min-width: 0; display: flex; flex-direction: column; }

.toolbar { height: 25px; display: flex; align-items: center; background: #fcfcfc; border-bottom: 1px solid #e4e4e4; }
.group { height: 17px; display: flex; align-items: center; gap: 7px; padding: 0 5px; border-left: 1px solid #ddd; }
.group:first-child { border: 0; padding-left: 4px; gap: 8px; padding-right: 6px; }
.group svg { width: 16px; height: 16px; }
.group.wide { padding: 0 6px; }
.group.sketch { width: 61px; }
.sketch button { gap: 2px; }
.sketch svg { width: 14px; height: 14px; }
.group .drop { margin-left: -2px; }
.group .drop svg { width: 8px; height: 8px; }
.search { align-self: stretch; margin-left: 2px; padding: 0 6px 0 7px; background: #f0f0f0; }
kbd { border: 1px solid #999; background: #f8f8f8; padding: 0 1px; font: 8px/11px Roboto, "DejaVu Sans", sans-serif; }
kbd:first-of-type { margin-left: 2px; }
kbd + kbd { padding: 0 3px; border-left: 0; }

.split { flex: 1; display: flex; min-height: 0; }
.panel { width: 143px; border-right: 1px solid #ddd; background: #fff; font-size: 9px; -webkit-text-stroke: 0; }
.filter { display: flex; align-items: center; gap: 7px; padding: 5px 6px 0 6px; height: 27px; }
.filter svg { width: 14px; height: 14px; }
.filter input { flex: 1; min-width: 0; height: 21px; padding: 0 4px; border: 1px solid #aaa; border-radius: 2px; font: inherit; color: #333; }
.filter input::placeholder { font-style: italic; color: #888; opacity: 1; }
.features { display: flex; align-items: center; height: 21px; padding-left: 3px; gap: 6px; }
.features h2 { margin: 0 7px 0 0; font: bold 9px/16px Roboto, sans-serif; color: #222; }
.features svg { width: 15px; height: 15px; }
.row.head { height: 18px; padding-left: 2px; gap: 4px; }
.chev { width: 10px; height: 10px; }
.panel li { height: 18px; display: flex; align-items: center; gap: 3px; }
.nested { margin-left: 6px; border-left: 1px solid #ccc; padding-left: 9px; }
.nested.plain { border-left-color: transparent; }
.panel li svg { width: 13px; height: 13px; }
.flat { padding-left: 3px; }
.flat li { gap: 3px; }
.flat .off svg { width: 16px; height: 16px; margin-right: -3px; align-self: flex-end; }
.flat .off svg { margin-bottom: -1px; margin-right: -4px; }
.off { color: #999; }
.rollback { height: 5px; margin: 7px 7px 24px 3px; background: #b5b5b5; }
.parts { margin-right: 3px; border-top: 1px solid #ddd; }

.canvas { flex: 1; min-width: 0; position: relative; background: #fff; overflow: hidden; }
.scene { width: 100%; height: 100%; position: absolute; }
.planelabel { font: italic 11px "Open Sans", sans-serif; fill: #3f5eb5; }
.toggle { position: absolute; left: -1px; top: 227px; width: 23px; height: 24px; background: #fff; border: 1px solid #bbb; border-left: 0; }
.viewcube { position: absolute; right: 8px; top: 9px; width: 110px; height: 112px; }
.cubelabel { font: 8px Roboto, sans-serif; fill: #222; }
.cubelabel .tiny { font-size: 6px; }
.axis { font: 9px Roboto, sans-serif; }
.z { fill: #2a2ad8; }
.x { fill: #d83a34; }
.render { position: absolute; right: 12px; top: 101px; gap: 4px; }
.render svg { width: 14px; height: 14px; }
.render .small { width: 8px; height: 8px; }
.tables { position: absolute; right: 0; top: 193px; width: 22px; border: 1px solid #bbb; border-right: 0; background: #fff; }
.tables button { width: 100%; height: 22px; }
.tables button + button { height: 23px; border-top: 1px solid #bbb; }
.measure { position: absolute; right: 7px; bottom: 3px; display: flex; gap: 10px; }
.measure svg { width: 14px; height: 14px; }

.sheets { height: 21px; display: flex; background: #d3d3d3; color: #777; }
.plus { width: 27px; padding-right: 5px; }
.plus svg { width: 14px; height: 14px; }
.sheet { width: 139px; justify-content: flex-start; gap: 1px; padding-left: 7px; background: #e6e6e6; margin-bottom: 1px; border-right: 1px solid #d3d3d3; }
.sheet svg { width: 14px; height: 14px; }
.sheet.active { background: #fff; color: #333; border-bottom: 2px solid #4568b5; }
```
